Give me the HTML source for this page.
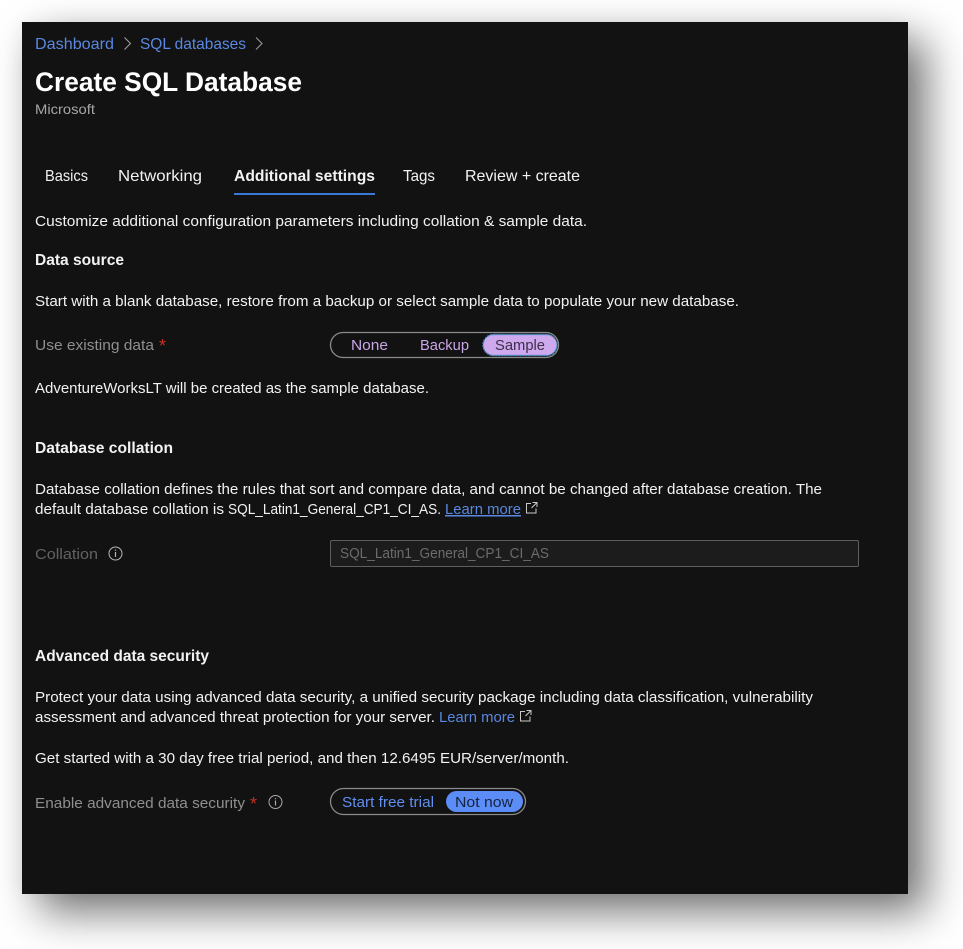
<!DOCTYPE html>
<html lang="en">
<head>
<meta charset="utf-8">
<title>Create SQL Database</title>
<style>
html,body{margin:0;padding:0;background:#fff;width:963px;height:949px;overflow:hidden}
#panel{position:absolute;left:22px;top:22px;width:886px;height:872px;background:#121212;box-shadow:18px 18px 40px rgba(0,0,0,.55),0 0 20px rgba(0,0,0,.05)}
svg{position:absolute;left:0;top:0;filter:blur(.3px)}
text{font-family:"Liberation Sans",sans-serif;font-size:15px;fill:#f2f2f2}
.b{font-weight:bold}
.l{fill:#5a88e0}
.g{fill:#8f8f8f}
.p{fill:#c9a6e6}
</style>
</head>
<body>
<div id="panel"></div>
<svg width="963" height="949" viewBox="0 0 963 949" xmlns="http://www.w3.org/2000/svg">
<!-- Breadcrumb -->
<text x="35" y="49" style="font-size:16px" class="l" textLength="79" lengthAdjust="spacingAndGlyphs">Dashboard</text>
<path d="M124.500 37.500l6 6-6 6" fill="none" stroke="#a0a0a0" stroke-width="1"/>
<text x="140" y="49" style="font-size:16px" class="l" textLength="106" lengthAdjust="spacingAndGlyphs">SQL databases</text>
<path d="M256 37.500l6 6-6 6" fill="none" stroke="#a0a0a0" stroke-width="1"/>
<!-- Title -->
<text x="35" y="91" style="font-size:27px;fill:#fff" class="b" textLength="267" lengthAdjust="spacingAndGlyphs">Create SQL Database</text>
<text x="35" y="114" style="font-size:14px;fill:#a6a6a6" textLength="60" lengthAdjust="spacingAndGlyphs">Microsoft</text>
<!-- Tabs -->
<text x="45" y="181" style="font-size:16px" textLength="43" lengthAdjust="spacingAndGlyphs">Basics</text>
<text x="118" y="181" style="font-size:16px" textLength="84" lengthAdjust="spacingAndGlyphs">Networking</text>
<text x="234" y="181" style="font-size:16px" class="b" textLength="141" lengthAdjust="spacingAndGlyphs">Additional settings</text>
<text x="403" y="181" style="font-size:16px" textLength="32" lengthAdjust="spacingAndGlyphs">Tags</text>
<text x="465" y="181" style="font-size:16px" textLength="115" lengthAdjust="spacingAndGlyphs">Review + create</text>
<rect x="234" y="193" width="141" height="2" fill="#3a78d8"/>
<text x="35" y="226" textLength="552" lengthAdjust="spacingAndGlyphs">Customize additional configuration parameters including collation &amp; sample data.</text>
<!-- Data source -->
<text x="35" y="265" style="font-size:16px" class="b" textLength="89" lengthAdjust="spacingAndGlyphs">Data source</text>
<text x="35" y="306" textLength="704" lengthAdjust="spacingAndGlyphs">Start with a blank database, restore from a backup or select sample data to populate your new database.</text>
<text x="35" y="350" class="g" textLength="119" lengthAdjust="spacingAndGlyphs">Use existing data</text>
<text x="159" y="352" style="fill:#c8301e;font-size:18px" textLength="7" lengthAdjust="spacingAndGlyphs">*</text>
<rect x="330.500" y="332.500" width="228" height="25" rx="12.500" fill="none" stroke="#8a8a8a" stroke-width="1.300"/>
<rect x="483" y="334.500" width="74" height="21" rx="10.500" fill="#cfa9ee" stroke="#3f8fc8" stroke-width="1.400" stroke-dasharray="2 1"/>
<text x="351" y="350" class="p" textLength="37" lengthAdjust="spacingAndGlyphs">None</text>
<text x="420" y="350" class="p" textLength="49" lengthAdjust="spacingAndGlyphs">Backup</text>
<text x="495" y="350" style="fill:#3c2f4a" textLength="50" lengthAdjust="spacingAndGlyphs">Sample</text>
<text x="35" y="393" textLength="394" lengthAdjust="spacingAndGlyphs">AdventureWorksLT will be created as the sample database.</text>
<!-- Collation -->
<text x="35" y="453" style="font-size:16px" class="b" textLength="138" lengthAdjust="spacingAndGlyphs">Database collation</text>
<text x="35" y="494" textLength="787" lengthAdjust="spacingAndGlyphs">Database collation defines the rules that sort and compare data, and cannot be changed after database creation. The</text>
<text x="35" y="514" textLength="189" lengthAdjust="spacingAndGlyphs">default database collation is</text>
<text x="228" y="514" textLength="213" lengthAdjust="spacingAndGlyphs">SQL_Latin1_General_CP1_CI_AS.</text>
<text x="445" y="514" class="l" text-decoration="underline" textLength="76" lengthAdjust="spacingAndGlyphs">Learn more</text>
<path d="M531 503.500h-4.500v9.500h9.500v-4.500M531.500 508l5-5M532.500 502.500h4.500v4.500" fill="none" stroke="#c8c8c8" stroke-width="1"/>
<text x="35" y="559" style="fill:#626262" textLength="63" lengthAdjust="spacingAndGlyphs">Collation</text>
<circle cx="115.500" cy="553.500" r="6.500" fill="none" stroke="#b5b5b5" stroke-width="1"/>
<path d="M115.500 552v5M115.500 549.500v1.300" stroke="#b5b5b5" stroke-width="1.200" fill="none"/>
<rect x="330.500" y="540.500" width="528" height="26" rx="1.500" fill="#1c1c1c" stroke="#5e5e5e" stroke-width="1"/>
<text x="340" y="558" style="fill:#6b6b6b" textLength="209" lengthAdjust="spacingAndGlyphs">SQL_Latin1_General_CP1_CI_AS</text>
<!-- Security -->
<text x="35" y="661" style="font-size:16px" class="b" textLength="174" lengthAdjust="spacingAndGlyphs">Advanced data security</text>
<text x="35" y="702" textLength="778" lengthAdjust="spacingAndGlyphs">Protect your data using advanced data security, a unified security package including data classification, vulnerability</text>
<text x="35" y="722" textLength="400" lengthAdjust="spacingAndGlyphs">assessment and advanced threat protection for your server.</text>
<text x="439" y="722" class="l" textLength="76" lengthAdjust="spacingAndGlyphs">Learn more</text>
<path d="M525 711.500h-4.500v9.500h9.500v-4.500M525.500 716l5-5M526.500 710.500h4.500v4.500" fill="none" stroke="#c8c8c8" stroke-width="1"/>
<text x="35" y="763" textLength="534" lengthAdjust="spacingAndGlyphs">Get started with a 30 day free trial period, and then 12.6495 EUR/server/month.</text>
<text x="35" y="808" class="g" textLength="210" lengthAdjust="spacingAndGlyphs">Enable advanced data security</text>
<text x="250" y="810" style="fill:#c8301e;font-size:18px" textLength="7" lengthAdjust="spacingAndGlyphs">*</text>
<circle cx="275.500" cy="802" r="6.500" fill="none" stroke="#a8a8a8" stroke-width="1"/>
<path d="M275.500 800.500v5M275.500 798v1.300" stroke="#a8a8a8" stroke-width="1.200" fill="none"/>
<rect x="330.500" y="788.500" width="195" height="26" rx="13" fill="none" stroke="#8a8a8a" stroke-width="1.300"/>
<rect x="446" y="791" width="77" height="21" rx="10.500" fill="#5c8df6"/>
<text x="342" y="807" style="fill:#5f8ff0" textLength="92" lengthAdjust="spacingAndGlyphs">Start free trial</text>
<text x="455" y="807" style="fill:#14233f" textLength="58" lengthAdjust="spacingAndGlyphs">Not now</text>
</svg>
</body>
</html>
